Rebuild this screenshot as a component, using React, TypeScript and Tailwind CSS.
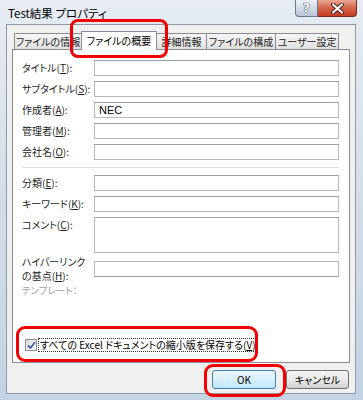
import React from "react";

const jp = {
  fontFamily: '"Noto Sans CJK JP", "Noto Sans", sans-serif',
  fontFeatureSettings: '"palt"',
} as React.CSSProperties;

function U({ c }: { c: string }) {
  return <span className="underline underline-offset-1">{c}</span>;
}

function Field({ label, value, h = 16 }: { label: React.ReactNode; value?: string; h?: number }) {
  return (
    <div className="flex items-start">
      <div className="w-[72px] shrink-0 whitespace-nowrap text-[10px] leading-[16px] text-[#1e1e1e]">{label}</div>
      <div
        className="flex-1 border border-[#b4b8bf] border-t-[#9a9ea6] bg-white px-[4px] text-[11px] leading-[14px] text-black"
        style={{ height: h, fontFamily: '"Liberation Sans", Arial, sans-serif' }}
      >
        {value}
      </div>
    </div>
  );
}

function Tab({ label, selected, w }: { label: string; selected?: boolean; w: number }) {
  if (selected)
    return (
      <div
        className="relative z-10 -ml-px mb-[-1px] flex h-[19px] items-start justify-center whitespace-nowrap border border-b-0 border-[#898c95] bg-white pt-[1px] text-[10px] leading-[16px] text-black"
        style={{ width: w }}
      >
        {label}
      </div>
    );
  return (
    <div
      className="-ml-px flex h-[16px] items-center justify-center whitespace-nowrap border border-b-0 border-[#898c95] bg-gradient-to-b from-[#f6f6f6] to-[#e0e0e0] text-[10px] leading-[14px] text-[#1e1e1e] first:ml-0"
      style={{ width: w }}
    >
      {label}
    </div>
  );
}

export default function App() {
  return (
    <div
      className="relative h-[400px] w-[363px] overflow-hidden bg-gradient-to-b from-[#e6ecf2] via-[#d3dde8] to-[#c2d3e4]"
      style={jp}
    >
      {/* title bar */}
      <div className="flex h-[24px] items-center pl-[8px] pt-[3px] text-[11.5px] text-black">Test結果 プロパティ</div>
      {/* caption buttons */}
      <div className="absolute right-[6px] top-0 flex h-[17px]">
        <div className="flex w-[23px] items-center justify-center rounded-bl-[4px] border border-t-0 border-[#6a7a8c] bg-gradient-to-b from-[#eef2f6] via-[#d3dce6] to-[#b9c6d4]">
          <span
            className="text-[12px] font-bold leading-none text-white"
            style={{ fontFamily: '"DejaVu Sans", sans-serif', textShadow: "0 0 1px #46546a, 0 0 1px #46546a, 0 0 1px #46546a" }}
          >
            ?
          </span>
        </div>
        <div className="flex w-[39px] items-center justify-center rounded-br-[4px] border border-l-0 border-t-0 border-[#7a2a1e] bg-gradient-to-b from-[#e9a895] via-[#d4644a] to-[#c23a20]">
          <svg width="13" height="11" viewBox="0 0 13 11">
            <path d="M2 1.5 L11 9.5 M11 1.5 L2 9.5" stroke="#4a1a10" strokeWidth="4" strokeLinecap="round" />
            <path d="M2 1.5 L11 9.5 M11 1.5 L2 9.5" stroke="#ffffff" strokeWidth="2.2" strokeLinecap="round" />
          </svg>
        </div>
      </div>

      {/* client area */}
      <div className="ml-[6px] flex h-[370px] w-[350px] flex-col border border-[#8b99a8] bg-[#f0f0f0] pl-[5px] pt-[6px]">
        {/* tab strip */}
        <div className="flex h-[18px] items-end pl-[2px]">
          <Tab label="ファイルの情報" w={68} />
          <Tab label="ファイルの概要" w={76} selected />
          <Tab label="詳細情報" w={51} />
          <Tab label="ファイルの構成" w={70} />
          <Tab label="ユーザー設定" w={64} />
        </div>
        {/* panel */}
        <div className="flex h-[314px] w-[338px] flex-col border border-[#898c95] bg-white pl-[9px] pr-[10px] pt-[10px]">
          <div className="flex flex-col gap-[5px]">
            <Field label={<>タイトル(<U c="T" />):</>} />
            <Field label={<>サブタイトル(<U c="S" />):</>} />
            <Field label={<>作成者(<U c="A" />):</>} value="NEC" />
            <Field label={<>管理者(<U c="M" />):</>} />
            <Field label={<>会社名(<U c="O" />):</>} />
          </div>
          <div className="mt-[7px] h-px bg-[#dfe3e8]" />
          <div className="mt-[7px] flex flex-col gap-[5px]">
            <Field label={<>分類(<U c="E" />):</>} />
            <Field label={<>キーワード(<U c="K" />):</>} />
            <Field label={<>コメント(<U c="C" />):</>} h={36} />
          </div>
          <div className="mt-[2px] flex items-center">
            <div className="flex w-[72px] shrink-0 flex-col whitespace-nowrap text-[10px] leading-[14px] text-[#1e1e1e]">
              <span>ハイパーリンク</span>
              <span>
                の基点(<U c="H" />):
              </span>
            </div>
            <div className="h-[16px] flex-1 border border-[#b4b8bf] border-b-[#9a9ea6]" />
          </div>
          <div className="mt-[1px] text-[9.5px] leading-[12px] text-[#a0a0a0]">テンプレート：</div>
          <div className="flex-1" />
          <div className="mb-[10px] ml-[3px] flex items-center">
            <div className="flex h-[12px] w-[12px] items-center justify-center border border-[#8f8f8f] bg-gradient-to-br from-[#dcdcdc] to-[#fafafa]">
              <svg width="9" height="9" viewBox="0 0 9 9">
                <path d="M1 4.5 L3.5 7 L8 1.2" stroke="#3d5aa6" strokeWidth="1.8" fill="none" />
              </svg>
            </div>
            <div className="ml-[1px] whitespace-nowrap border border-dotted border-[#333] px-[1px] text-[10px] leading-[12px] text-black">
              すべての Excel ドキュメントの縮小版を保存する(<U c="V" />)
            </div>
          </div>
        </div>
        {/* buttons */}
        <div className="mt-[7px] flex justify-end gap-[10px] pr-[6px]">
          <div className="flex h-[19px] w-[64px] items-center justify-center rounded-[3px] border border-[#3c7fb1] bg-gradient-to-b from-[#eaf6fd] via-[#d9effb] to-[#bee6fd] text-[10px] text-black">
            OK
          </div>
          <div className="flex h-[19px] w-[63px] items-center justify-center rounded-[3px] border border-[#707070] bg-gradient-to-b from-[#f2f2f2] via-[#ebebeb] to-[#cfcfcf] text-[10px] text-black">
            キャンセル
          </div>
        </div>
      </div>

      {/* red annotation outlines */}
      <div className="pointer-events-none absolute left-[70px] top-[19px] h-[39px] w-[98px] rounded-[8px] border-[3px] border-[#f00000]" />
      <div className="pointer-events-none absolute left-[16px] top-[326px] h-[36px] w-[242px] rounded-[9px] border-[3px] border-[#f00000]" />
      <div className="pointer-events-none absolute left-[204px] top-[364px] h-[33px] w-[82px] rounded-[9px] border-[3px] border-[#f00000]" />
    </div>
  );
}
